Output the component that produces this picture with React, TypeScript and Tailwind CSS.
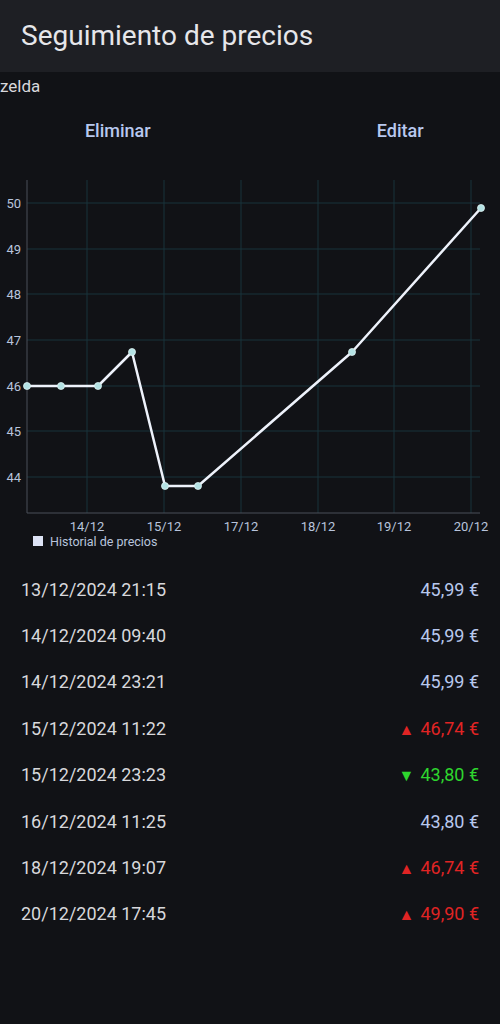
import React from 'react';

const rows = [
  { date: '13/12/2024 21:15', price: '45,99 €', trend: 'same' },
  { date: '14/12/2024 09:40', price: '45,99 €', trend: 'same' },
  { date: '14/12/2024 23:21', price: '45,99 €', trend: 'same' },
  { date: '15/12/2024 11:22', price: '46,74 €', trend: 'up' },
  { date: '15/12/2024 23:23', price: '43,80 €', trend: 'down' },
  { date: '16/12/2024 11:25', price: '43,80 €', trend: 'same' },
  { date: '18/12/2024 19:07', price: '46,74 €', trend: 'up' },
  { date: '20/12/2024 17:45', price: '49,90 €', trend: 'up' },
];

// chart coords are relative to the svg top (page y 170)
const yTicks = [
  { v: '50', y: 33 },
  { v: '49', y: 79 },
  { v: '48', y: 124 },
  { v: '47', y: 170 },
  { v: '46', y: 216 },
  { v: '45', y: 261 },
  { v: '44', y: 307 },
];
const xTicks = [
  { v: '14/12', x: 87 },
  { v: '15/12', x: 164 },
  { v: '17/12', x: 241 },
  { v: '18/12', x: 318 },
  { v: '19/12', x: 394 },
  { v: '20/12', x: 471 },
];
const points = [
  [27, 216], [61, 216], [98, 216], [132, 182], [165, 316], [198, 316], [352, 182], [481, 38],
];

function Chart() {
  return (
    <svg width="500" height="382" viewBox="0 0 500 382" className="block">
      {yTicks.map(t => (
        <g key={t.v}>
          <line x1={27} x2={480} y1={t.y} y2={t.y} stroke="#19323a" strokeWidth={1} />
          <text x={21} y={t.y + 4.5} textAnchor="end" fontSize={13} fill="#b8c4dc" fontFamily="Roboto, sans-serif">{t.v}</text>
        </g>
      ))}
      {xTicks.map(t => (
        <g key={t.v}>
          <line x1={t.x} x2={t.x} y1={10} y2={343} stroke="#19323a" strokeWidth={1} />
          <text x={t.x} y={361} textAnchor="middle" fontSize={13} fill="#b8c4dc" fontFamily="Roboto, sans-serif">{t.v}</text>
        </g>
      ))}
      <line x1={27} x2={27} y1={10} y2={343} stroke="#4a4f58" strokeWidth={1} />
      <line x1={27} x2={480} y1={343} y2={343} stroke="#4a4f58" strokeWidth={1} />
      <polyline points={points.map(p => p.join(',')).join(' ')} fill="none" stroke="#eef2fb" strokeWidth={2.5} strokeLinejoin="round" />
      {points.map((p, i) => (
        <circle key={i} cx={p[0]} cy={p[1]} r={3.5} fill="#b4e2e4" stroke="#dff3f3" strokeWidth={0.8} />
      ))}
      <rect x={33} y={366} width={10} height={10} fill="#dde3f5" />
      <text x={50} y={376} fontSize={12.5} fill="#b8c4dc" fontFamily="Roboto, sans-serif">Historial de precios</text>
    </svg>
  );
}

export default function App() {
  return (
    <div className="w-[500px] min-h-[1024px] bg-[#111216] font-['Roboto',sans-serif]">
      <div className="h-[72px] bg-[#1e1f24] flex items-center px-[21px]">
        <h1 className="text-[28px] text-[#e6e6ea]">Seguimiento de precios</h1>
      </div>
      <div className="h-[28px] leading-[28px] text-[17px] text-[#d8d8dc]">zelda</div>
      <div className="flex h-[60px] items-center text-[18px] font-medium text-[#b8c8ee]">
        <div className="w-[236px] text-center">Eliminar</div>
        <div className="w-[200px] ml-[65px] text-center">Editar</div>
      </div>
      <div className="pt-[10px]">
        <Chart />
      </div>
      <div className="pt-[14px]">
        {rows.map(r => (
          <div key={r.date} className="h-[46.4px] flex items-center justify-between pl-[21px] pr-[21px] text-[18px]">
            <span className="text-[#d8d8dc]">{r.date}</span>
            {r.trend === 'up' && <span className="text-[#e02424]"><span className="text-[16px] mr-[6px]">▲</span>{r.price}</span>}
            {r.trend === 'down' && <span className="text-[#2ed62e]"><span className="text-[16px] mr-[6px]">▼</span>{r.price}</span>}
            {r.trend === 'same' && <span className="text-[#b8c8ee]">{r.price}</span>}
          </div>
        ))}
      </div>
    </div>
  );
}
